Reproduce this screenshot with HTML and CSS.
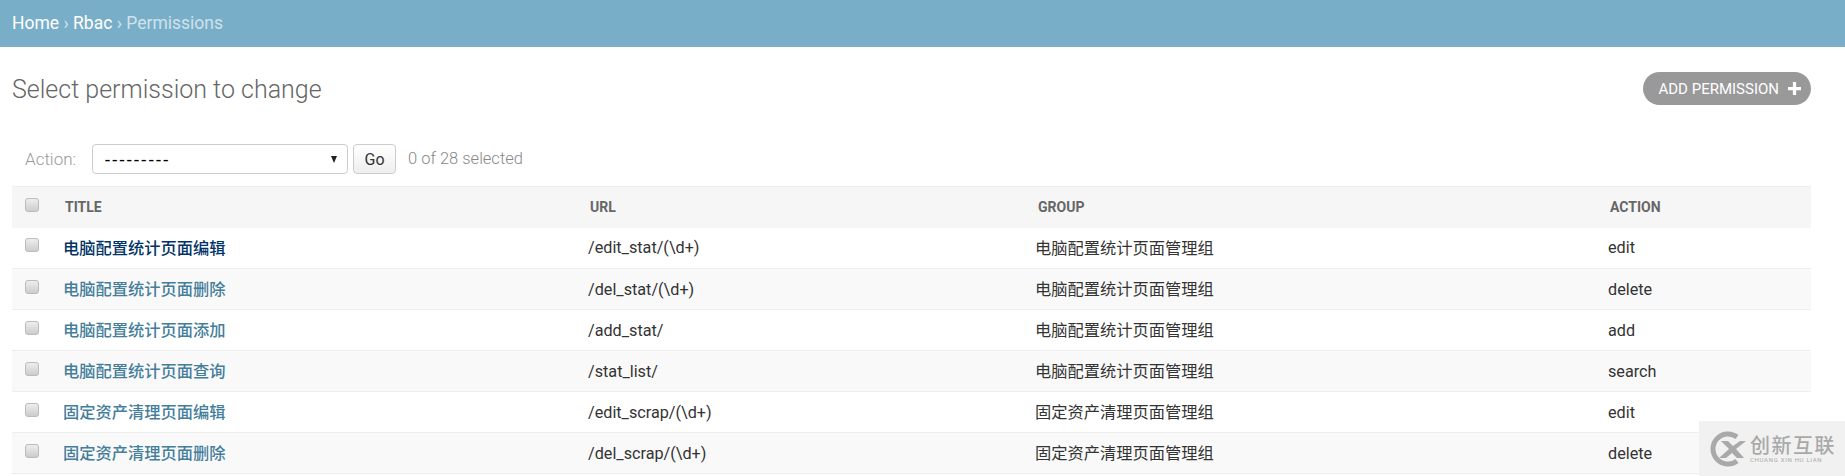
FILE: index.html
```html
<!DOCTYPE html>
<html lang="zh">
<head>
<meta charset="utf-8">
<title>Select permission to change</title>
<link rel="stylesheet" href="styles.css">
</head>
<body>
<div class="breadcrumbs"><a href="#">Home</a> › <a href="#">Rbac</a> › Permissions</div>
<main class="content">
  <div class="title-row">
    <h1>Select permission to change</h1>
    <a class="add-btn" href="#">ADD PERMISSION
      <svg class="plus" viewBox="0 0 12 12" width="13" height="13"><path d="M4.500 0h3v4.500H12v3H7.500V12h-3V7.500H0v-3h4.500z"/></svg>
    </a>
  </div>
  <div class="actions">
    <label class="action-label">Action:</label>
    <span class="select"><span class="dashes">---------</span><span class="caret"></span></span>
    <button class="go">Go</button>
    <span class="count">0 of 28 selected</span>
  </div>
  <table>
    <colgroup><col class="c-check"><col class="c-title"><col class="c-url"><col class="c-group"><col></colgroup>
    <thead><tr><th><input type="checkbox"></th><th>Title</th><th>Url</th><th>Group</th><th>Action</th></tr></thead>
    <tbody>
      <tr><td><input type="checkbox"></td><td><a class="hover" href="#">电脑配置统计页面编辑</a></td><td>/edit_stat/(\d+)</td><td><span class="cn">电脑配置统计页面管理组</span></td><td>edit</td></tr>
      <tr><td><input type="checkbox"></td><td><a href="#">电脑配置统计页面删除</a></td><td>/del_stat/(\d+)</td><td><span class="cn">电脑配置统计页面管理组</span></td><td>delete</td></tr>
      <tr><td><input type="checkbox"></td><td><a href="#">电脑配置统计页面添加</a></td><td>/add_stat/</td><td><span class="cn">电脑配置统计页面管理组</span></td><td>add</td></tr>
      <tr><td><input type="checkbox"></td><td><a href="#">电脑配置统计页面查询</a></td><td>/stat_list/</td><td><span class="cn">电脑配置统计页面管理组</span></td><td>search</td></tr>
      <tr><td><input type="checkbox"></td><td><a href="#">固定资产清理页面编辑</a></td><td>/edit_scrap/(\d+)</td><td><span class="cn">固定资产清理页面管理组</span></td><td>edit</td></tr>
      <tr><td><input type="checkbox"></td><td><a href="#">固定资产清理页面删除</a></td><td>/del_scrap/(\d+)</td><td><span class="cn">固定资产清理页面管理组</span></td><td>delete</td></tr>
    </tbody>
  </table>
</main>
<div class="watermark">
  <svg class="wm-logo" viewBox="0 0 36 36" width="36" height="36">
    <path d="M27 6A15 15 0 1 0 27 30" fill="none" stroke="#a9a9a9" stroke-width="5"/>
    <path d="M11 10h7l5 5 7-5h6l-10 8 8 9h-7l-5-5-6 5h-7l10-9z" fill="#a9a9a9"/>
  </svg>
  <div class="wm-text"><div class="wm-cn">创新互联</div><div class="wm-en">CHUANG XIN HU LIAN</div></div>
</div>
</body>
</html>
```
FILE: styles.css
```css
* { box-sizing: border-box; }
html, body { margin: 0; height: 476px; overflow: hidden; }
body {
  position: relative;
  background: #fff;
  font-family: Roboto, "Noto Sans CJK SC", sans-serif;
  color: #333;
  font-size: 16px;
}
a { text-decoration: none; }
.breadcrumbs {
  height: 47px;
  background: #79aec8;
  color: #cfe2ec;
  padding: 0 12px;
  font-size: 17.500px;
  line-height: 47px;
  font-weight: 400;
}
.breadcrumbs a { color: #fff; font-weight: 400; }
.content { padding: 0 34px 0 12px; }
.title-row {
  display: flex;
  justify-content: space-between;
  align-items: center;
  height: 85px;
}
h1 {
  margin: 0;
  font-size: 25px;
  font-weight: 300;
  color: #666;
}
.add-btn {
  display: flex;
  align-items: center;
  gap: 9px;
  height: 33px;
  margin-bottom: 2px;
  padding: 0 10px 0 15px;
  border-radius: 17px;
  background: #999;
  color: #fff;
  font-size: 15px;
  font-weight: 400;
}
.plus { fill: #fff; }
.actions {
  display: flex;
  align-items: center;
  height: 54px;
  padding-left: 13px;
  color: #999;
  font-size: 17px;
}
.action-label { width: 67px; font-weight: 300; }
.select {
  display: flex;
  align-items: center;
  justify-content: space-between;
  width: 256px;
  height: 30px;
  padding: 0 10px 0 12px;
  border: 1px solid #ccc;
  border-radius: 4px;
  background: #fff;
  color: #000;
  font-size: 18px;
}
.dashes { letter-spacing: 2.300px; }
.caret {
  border-left: 3.500px solid transparent;
  border-right: 3.500px solid transparent;
  border-top: 7px solid #222;
}
.go {
  width: 43px;
  height: 30px;
  margin-left: 5px;
  padding: 0;
  border: 1px solid #ccc;
  border-radius: 4px;
  background: linear-gradient(#fff, #eee);
  color: #333;
  font: 16px Roboto, sans-serif;
}
.count { margin: -2px 0 0 12px; font-size: 16.500px; font-weight: 300; color: #888; }
table {
  width: 100%;
  border-collapse: collapse;
  table-layout: fixed;
}
.c-check { width: 51px; }
.c-title { width: 525px; }
.c-url { width: 448px; }
.c-group { width: 572px; }
thead th {
  height: 41px;
  background: #f6f6f6;
  border-top: 1px solid #eee;
  padding: 0 0 0 2px;
  text-align: left;
  font-size: 14px;
  font-weight: 700;
  color: #666;
  text-transform: uppercase;
}
tbody td {
  height: 41px;
  padding: 0;
  border-bottom: 1px solid #eee;
  font-size: 16.200px;
  color: #333;
}
tbody tr:nth-child(even) td { background: #f9f9f9; }
tbody td a, .cn { font-size: 16.250px; vertical-align: 3px; }
.cn { margin-left: -1px; }
tbody td a { color: #447e9b; font-weight: 500; }
tbody td a.hover { color: #036; }
td:first-child, th:first-child { padding-left: 13px; }
input[type=checkbox] {
  appearance: none;
  display: block;
  width: 14px;
  height: 14px;
  margin: -5px 0 0;
  border: 1px solid #bbb;
  border-radius: 3px;
  background: linear-gradient(#eee, #ccc);
}
.watermark {
  position: absolute;
  right: 0;
  bottom: 0;
  width: 146px;
  height: 55px;
  background: #f1f1f1;
  display: flex;
  align-items: center;
  gap: 4px;
  padding-left: 11px;
}
.wm-text { color: #a9a9a9; }
.wm-cn { font: 500 20px/22px "Noto Sans CJK SC", sans-serif; letter-spacing: 1.500px; }
.wm-en { font: 6px/7px Roboto, sans-serif; letter-spacing: 0.700px; white-space: nowrap; }
```
